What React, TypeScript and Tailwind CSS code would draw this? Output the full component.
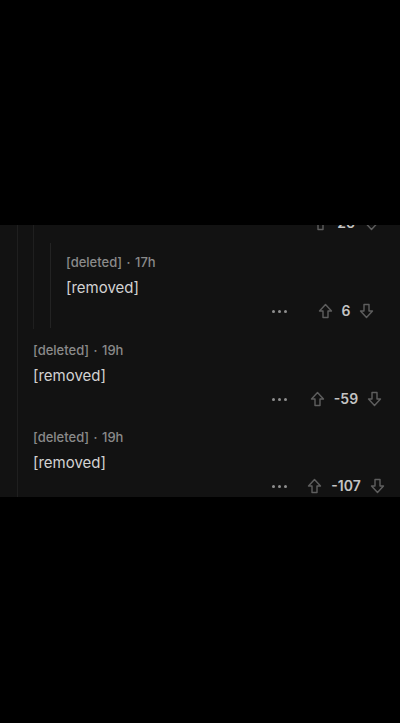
import React from "react";

const Up = () => (
  <svg width="15" height="16" viewBox="0 0 15 16" fill="none">
    <path d="M7.5 1.5 L13.5 8 H10 V14.5 H5 V8 H1.5 Z" stroke="#5e5e5e" strokeWidth="1.4" strokeLinejoin="round" />
  </svg>
);
const Down = () => (
  <svg width="15" height="16" viewBox="0 0 15 16" fill="none">
    <path d="M7.5 14.5 L13.5 8 H10 V1.5 H5 V8 H1.5 Z" stroke="#5e5e5e" strokeWidth="1.4" strokeLinejoin="round" />
  </svg>
);

function Votes({ score }: { score: string }) {
  return (
    <div className="w-[80px] flex items-center justify-center gap-[9px]">
      <Up />
      <span className="text-[#c4c4c4] text-[14px] font-semibold leading-none">{score}</span>
      <Down />
    </div>
  );
}

function Actions({ score }: { score: string }) {
  return (
    <div className="flex items-center justify-end h-[20px] pr-[14px]">
      <div className="flex items-center gap-[3px] mr-[19px]">
        <span className="w-[3px] h-[3px] rounded-full bg-[#8e8e8e]" />
        <span className="w-[3px] h-[3px] rounded-full bg-[#8e8e8e]" />
        <span className="w-[3px] h-[3px] rounded-full bg-[#8e8e8e]" />
      </div>
      <Votes score={score} />
    </div>
  );
}

function Comment({ time }: { time: string }) {
  return (
    <div className="flex flex-col">
      <div className="text-[13px] leading-[16px] text-[#8a8a8a] font-medium">
        [deleted] <span className="mx-[1px]">·</span> {time}
      </div>
      <div className="text-[15px] leading-[20px] text-[#d2d2d2] mt-[8px]">[removed]</div>
    </div>
  );
}

export default function App() {
  return (
    <div className="w-[400px] h-[723px] bg-black flex flex-col" style={{ fontFamily: "Inter, 'Noto Sans', sans-serif" }}>
      <div className="h-[225px] shrink-0" />
      <div className="h-[272px] shrink-0 bg-[#121212] overflow-hidden flex">
        <div className="w-[17px] shrink-0" />
        <div className="w-px shrink-0 bg-[#1f1f1f]" />
        <div className="flex-1 flex flex-col">
          <div className="flex">
            <div className="w-[15px] shrink-0" />
            <div className="w-px shrink-0 bg-[#1f1f1f]" />
            <div className="flex-1 flex flex-col">
              <div className="h-[6px] overflow-visible flex justify-end pr-[14px]">
                <div className="-mt-[10px] h-[16px]">
                  <Votes score="26" />
                </div>
              </div>
              <div className="flex">
                <div className="w-[16px] shrink-0" />
                <div className="w-px shrink-0 bg-[#232323] mt-[12px] mb-[1px]" />
                <div className="flex-1 flex flex-col pl-[15px] pt-[23px] pb-[8px]">
                  <Comment time="17h" />
                  <div className="mt-[3px]">
                    <Actions score="6" />
                  </div>
                </div>
              </div>
            </div>
          </div>
          <div className="flex flex-col pl-[15px] pt-[13px]">
            <Comment time="19h" />
            <div className="mt-[3px]">
              <Actions score="-59" />
            </div>
          </div>
          <div className="flex flex-col pl-[15px] pt-[20px]">
            <Comment time="19h" />
            <div className="mt-[3px]">
              <Actions score="-107" />
            </div>
          </div>
        </div>
      </div>
      <div className="flex-1" />
    </div>
  );
}
